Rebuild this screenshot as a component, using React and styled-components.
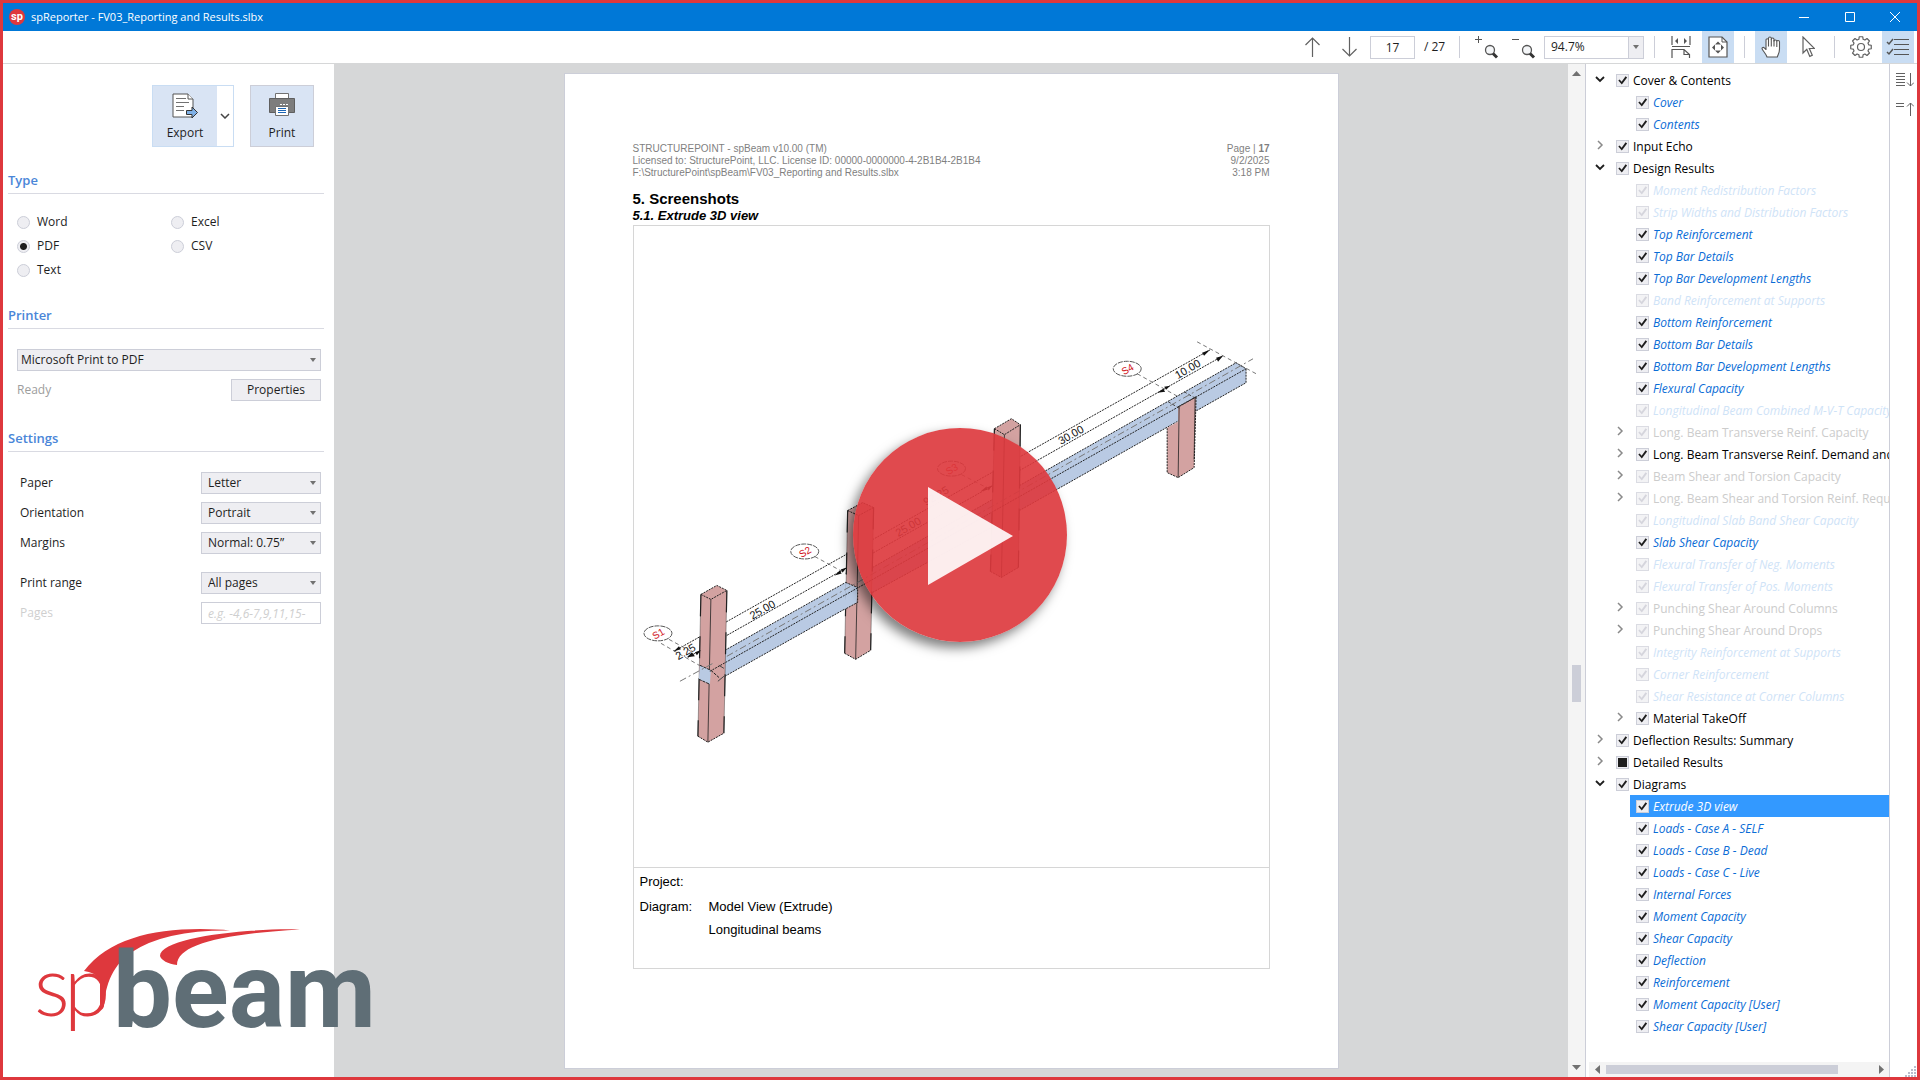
import React from 'react'
import styled, { createGlobalStyle } from 'styled-components'

const uiFont = '"Open Sans", "Noto Sans", sans-serif'
const docFont = '"Liberation Sans", Arial, sans-serif'
const red = '#de383d'
const blue = '#0078d7'
const link = '#0a6cd6'
const line = '#ccced8'
const control = '#eeeef2'
const active = '#c9ddf3'
const canvas = '#d6d7d8'

const GlobalStyle = createGlobalStyle`
  * {
    box-sizing: border-box;
  }

  body {
    margin: 0;
    font-family: ${uiFont};
    font-size: 12px;
    line-height: 16px;
    color: #1e1e1e;
    background: white;
  }

  button, input, select {
    font: inherit;
    color: inherit;
    margin: 0;
  }

  svg {
    display: block;
    flex: none;
  }
`

const Window = styled.div`
  position: relative;
  display: flex;
  flex-direction: column;
  min-height: 100vh;
  border: 3px solid ${red};
`

/* title bar */

const TitleBar = styled.header`
  display: flex;
  align-items: center;
  height: 28px;
  padding: 0 6px;
  color: white;
  background: ${blue};
`

const AppTitle = styled.h1`
  flex: 1;
  margin: 0 0 0 6px;
  font-size: 11px;
  font-weight: normal;
`

const WindowButtons = styled.div`
  display: flex;
`

const WindowButton = styled.button`
  display: flex;
  align-items: center;
  justify-content: center;
  width: 46px;
  height: 28px;
  padding: 0;
  border: none;
  background: none;

  &:last-child {
    width: 44px;
    margin-right: -6px;
  }
`

/* toolbar */

const Toolbar = styled.div`
  display: flex;
  align-items: center;
  justify-content: flex-end;
  gap: 5px;
  height: 33px;
  padding-right: 3px;
  border-bottom: 1px solid #d6d7d8;
`

const ToolButton = styled.button`
  display: flex;
  align-items: center;
  justify-content: center;
  width: 32px;
  height: 32px;
  padding: 0;
  border: none;
  background: ${props => props.$on ? active : 'none'};
`

const Divider = styled.div`
  width: 1px;
  height: 22px;
  margin: 0 5px;
  background: ${line};
`

const PageInput = styled.input`
  width: 45px;
  height: 23px;
  padding: 0;
  border: 1px solid ${line};
  text-align: center;
`

const PageCount = styled.span`
  width: 29px;
  text-align: center;
  white-space: nowrap;
`

const ZoomBox = styled.div`
  display: flex;
  width: 100px;
  height: 23px;
  border: 1px solid ${line};

  input {
    flex: 1;
    min-width: 0;
    padding: 0 6px;
    border: none;
  }

  button {
    display: flex;
    align-items: center;
    justify-content: center;
    width: 15px;
    padding: 0;
    border: none;
    border-left: 1px solid ${line};
    background: ${control};
  }
`

/* columns */

const Body = styled.div`
  flex: 1;
  display: flex;
  align-items: stretch;
`

const Sidebar = styled.aside`
  display: flex;
  flex-direction: column;
  width: 331px;
  padding: 21px 10px 0 5px;
`

const Actions = styled.div`
  display: flex;
  justify-content: flex-end;
  gap: 16px;
  padding-right: 10px;
  margin-bottom: 23px;
`

const SplitButton = styled.div`
  display: flex;
  height: 62px;
  border: 1px solid ${active};
`

const BigButton = styled.button`
  display: flex;
  flex-direction: column;
  align-items: center;
  justify-content: space-between;
  width: 64px;
  height: ${props => props.$bordered ? '62px' : '60px'};
  padding: 7px 0 5px;
  border: ${props => props.$bordered ? '1px solid ' + line : 'none'};
  background: #d9e4f4;
`

const DropButton = styled.button`
  display: flex;
  align-items: center;
  justify-content: center;
  width: 16px;
  padding: 0;
  border: none;
  background: white;
`

const SectionTitle = styled.h2`
  margin: 0 0 ${props => props.$gap}px;
  padding-bottom: 3px;
  border-bottom: 1px solid #d9dae2;
  font-size: 13px;
  line-height: 20px;
  font-weight: 600;
  color: #4a86d8;
`

const RadioGrid = styled.div`
  display: grid;
  grid-template-columns: 154px 1fr;
  grid-auto-rows: 24px;
  padding-left: 9px;
  margin-bottom: 23px;
`

const RadioLabel = styled.label`
  display: flex;
  align-items: center;
  gap: 7px;
`

const Radio = styled.input`
  appearance: none;
  width: 13px;
  height: 13px;
  border: 1px solid ${line};
  border-radius: 50%;
  background: ${control};

  &:checked {
    background: radial-gradient(circle, #1e1e1e 3px, ${control} 4px);
  }
`

const Fields = styled.div`
  display: flex;
  flex-direction: column;
  gap: 8px;
  padding: 0 3px 0 ${props => props.$indent}px;
  margin-bottom: 27px;
`

const Field = styled.div`
  display: flex;
  align-items: center;
  justify-content: space-between;
  margin-top: ${props => props.$apart ? '10px' : '0'};
  color: ${props => props.$off ? '#cfcfcf' : 'inherit'};
`

const SelectBox = styled.span`
  display: grid;
  align-items: center;
  width: ${props => props.$wide ? '100%' : '120px'};

  > * {
    grid-area: 1 / 1;
  }

  svg {
    justify-self: end;
    margin-right: 5px;
    pointer-events: none;
  }
`

const Select = styled.select`
  appearance: none;
  width: 100%;
  height: 22px;
  padding: 0 20px 0 ${props => props.$wide ? '3px' : '6px'};
  border: 1px solid ${line};
  border-radius: 0;
  background: ${control};
`

const TextField = styled.input`
  width: 120px;
  height: 22px;
  padding: 0 6px;
  border: 1px solid ${line};
  background: white;

  &::placeholder {
    font-style: italic;
    color: #cfcfcf;
    opacity: 1;
  }
`

const Muted = styled.span`
  color: #9d9d9d;
`

const SmallButton = styled.button`
  width: 90px;
  height: 22px;
  padding: 0;
  border: 1px solid ${line};
  background: ${control};
`

/* document */

const Viewer = styled.main`
  flex: 1;
  display: flex;
  justify-content: center;
  padding: 9px 0 8px;
  background: ${canvas};
`

const Paper = styled.article`
  width: 775px;
  padding: 69px 68px 80px 68px;
  border: 1px solid ${line};
  background: white;
  font-family: ${docFont};
  color: black;
`

const PaperHead = styled.div`
  display: flex;
  justify-content: space-between;
  margin-bottom: 10px;
  font-size: 10px;
  line-height: 12px;
  color: #7f7f7f;

  p {
    margin: 0;
  }

  div:last-child {
    text-align: right;
  }
`

const Chapter = styled.h2`
  margin: 0;
  font-size: 15px;
  line-height: 19px;
`

const SubChapter = styled.h3`
  margin: 0;
  font-size: 13px;
  line-height: 16px;
  font-style: italic;
`

const Figure = styled.figure`
  margin: 1px 0 0;
  border: 1px solid #d6d6d6;

  > svg {
    width: 100%;
    height: auto;
  }
`

const Caption = styled.figcaption`
  display: grid;
  grid-template-columns: 69px 1fr;
  grid-template-rows: 19px 17px 17px;
  row-gap: 6px;
  padding: 5px 6px 30px;
  border-top: 1px solid #d6d6d6;
  font-size: 13px;
  line-height: 17px;
`

/* scroll bars */

const VScroll = styled.div`
  display: flex;
  flex-direction: column;
  align-items: center;
  width: 18px;
  padding: 6px 0;
  border-right: 1px solid ${line};
  background: #f4f4f4;
`

const Track = styled.div`
  flex: 1;
  align-self: stretch;
  display: grid;
  ${props => props.$across
    ? 'grid-template-columns: 232px 1fr; align-items: center;'
    : 'grid-template-rows: 589fr 37px 363fr; justify-items: center;'}
`

const Thumb = styled.div`
  background: ${line};
  ${props => props.$across ? 'height: 9px;' : 'width: 9px; grid-row: 2;'}
`

const HScroll = styled.div`
  display: flex;
  align-items: center;
  gap: 6px;
  height: 15px;
  margin: auto 0 0 3px;
  padding: 0 4px 0 5px;
  background: #f4f4f4;
`

/* contents tree */

const Explorer = styled.nav`
  display: flex;
  flex-direction: column;
  width: 304px;
  padding-top: 5px;
  border-right: 1px solid ${line};
  overflow: hidden;
`

const Tree = styled.ul`
  margin: 0;
  padding: 0;
  list-style: none;
`

const TreeRow = styled.li`
  display: flex;
  align-items: center;
  height: 22px;
  margin-left: ${props => props.$sub ? '24px' : '4px'};
  white-space: nowrap;
`

const Toggle = styled.button`
  flex: none;
  display: flex;
  align-items: center;
  justify-content: center;
  width: 20px;
  height: 20px;
  padding: 0 0 2px;
  border: none;
  background: none;
`

const TreeItem = styled.label`
  flex: 1 0 auto;
  display: flex;
  align-items: center;
  gap: 4px;
  height: 22px;
  padding: 1px 0 0 6px;
  font-style: ${props => props.$leaf ? 'italic' : 'normal'};
  font-weight: ${props => props.$leaf ? 'normal' : '500'};
  color: ${props => {
    if (props.$selected) return 'white'
    if (props.$off) return props.$leaf ? '#cfe3f7' : '#cccccc'
    return props.$leaf ? link : 'black'
  }};
  background: ${props => props.$selected ? '#3399ff' : 'none'};
`

const Check = styled.input`
  appearance: none;
  flex: none;
  display: grid;
  width: 13px;
  height: 13px;
  border: 1px solid ${line};
  background: ${control};
  opacity: ${props => props.disabled ? '0.7' : '1'};

  &::before {
    content: '';
    background: ${props => props.disabled ? '#c4c4ce' : '#1e1e1e'};
    margin: ${props => props.$partial ? '1px' : '0'};
    clip-path: ${props => props.$partial
      ? 'none'
      : 'polygon(12% 50%, 24% 40%, 42% 62%, 78% 12%, 92% 22%, 44% 86%)'};
  }
`

const SideStrip = styled.div`
  display: flex;
  flex-direction: column;
  align-items: center;
  width: 27px;
  padding: 6px 0 0 2px;
`

const StripButton = styled.button`
  padding: 3px 0 12px;
  border: none;
  background: none;
`

const Grip = styled.div`
  margin: auto 0 0 auto;
`

/* things lying over the window */

const PlayLayer = styled.div`
  position: absolute;
  inset: 0;
  display: flex;
  align-items: center;
  justify-content: center;
  padding-bottom: 11px;
  pointer-events: none;
`

const PlayButton = styled.button`
  width: 214px;
  height: 214px;
  padding: 0;
  border: none;
  border-radius: 50%;
  background: rgba(221, 56, 60, 0.91);
  box-shadow: -5px 6px 12px rgba(0, 0, 0, 0.5);
  pointer-events: auto;
`

const Logo = styled.svg`
  position: absolute;
  left: 27px;
  bottom: 7px;
`

/* icons */

const Caret = ({ up }) => (
  <svg width="9" height="6" viewBox="0 0 9 6" fill="#717171">
    <path d={up ? 'M0 6 4.500 1 9 6z' : 'M0 0h9L4.500 5z'}/>
  </svg>
)

const SmallCaret = () => (
  <svg width="6" height="4" viewBox="0 0 6 4" fill="#717171">
    <path d="M0 0h6L3 4z"/>
  </svg>
)

const SideCaret = ({ right }) => (
  <svg width="6" height="9" viewBox="0 0 6 9" fill="#717171">
    <path d={right ? 'M0 0v9l5-4.500z' : 'M6 0v9L1 4.500z'}/>
  </svg>
)

const Chevron = ({ open }) => (
  <svg width="10" height="10" viewBox="0 0 10 10" fill="none" stroke={open ? '#1e1e1e' : '#8a8a8a'} strokeWidth={open ? 1.8 : 1.5}>
    <path d={open ? 'M1 3l4 4 4-4' : 'M3 1l4 4-4 4'}/>
  </svg>
)

const ArrowIcon = ({ down }) => (
  <svg width="16" height="20" viewBox="0 0 16 20" fill="none" stroke="#616161" strokeWidth="1.2">
    <path d={down ? 'M8.500 0v19M1.500 12l7 7 7-7' : 'M8.500 20V1M1.500 8l7-7 7 7'}/>
  </svg>
)

const MagnifierIcon = ({ plus }) => (
  <svg width="26" height="24" viewBox="0 0 26 24" fill="none" stroke="#555">
    <path d={plus ? 'M2 4.500h7M5.500 1v7' : 'M2 4.500h7'}/>
    <circle cx="17" cy="15" r="4.500" fill="#f4f6f8" strokeWidth="1.300"/>
    <path d="M20 18.500l4 4" stroke="#333" strokeWidth="3"/>
  </svg>
)

const FitWidthIcon = () => (
  <svg width="20" height="22" viewBox="0 0 20 22" fill="none" stroke="#555" strokeWidth="1.200">
    <path d="M1 0v9M19 0v9M1 10.500h18M1 22v-8.500h12l5.500 5V22M13 13.500v5h5.500"/>
    <path d="M4 5l3-3v6zM16 5l-3-3v6z" fill="#555" stroke="none"/>
  </svg>
)

const FitPageIcon = () => (
  <svg width="20" height="22" viewBox="0 0 20 22" fill="none" stroke="#555">
    <path d="M1 1h13l5 5v15H1z" fill="white" strokeWidth="1.200"/>
    <path d="M14 1v5h5"/>
    <path d="M10 5.500l3 3H7zM10 17.500l3-3H7zM4 11.500l3-3v6zM16 11.500l-3-3v6z" fill="#555" stroke="none"/>
    <path d="M10 8.500l3 3-3 3-3-3z" fill="white" stroke="none"/>
  </svg>
)

const HandIcon = () => (
  <svg width="20" height="22" viewBox="0 0 20 22" fill="white" stroke="#555" strokeWidth="1.100" strokeLinejoin="round">
    <path d="M6 21c-1-3-3-5-4.600-7.500-1-1.600.6-2.700 1.900-1.600L5 13.500V4c0-1.700 2.400-1.700 2.500 0V2.300c.1-1.800 2.700-1.800 2.800 0v.9c.2-1.700 2.600-1.600 2.700.1v1.800c.3-1.500 2.700-1.400 2.800.3.200-1.300 2.600-1.200 2.700.5V13c0 4-1.500 5.500-2.200 8z"/>
    <path d="M7.500 4v6.500M10.300 3v7.500M13 4v6.500M15.800 5.500V11" fill="none"/>
  </svg>
)

const PointerIcon = () => (
  <svg width="14" height="22" viewBox="0 0 14 22" fill="white" stroke="#616161" strokeWidth="1.200">
    <path d="M2 1v16l3.800-3.600 3 7 2.500-1.100-3-6.800h5.200z"/>
  </svg>
)

// outline of an eight toothed wheel, four points for every tooth
const gearPath = Array.from({ length: 8 }, (_, i) => (
  [[-0.27, 8], [-0.17, 10.4], [0.17, 10.4], [0.27, 8]].map(([turn, r]) => {
    const a = i * Math.PI / 4 + turn
    return `${(11 + r * Math.sin(a)).toFixed(2)} ${(11 - r * Math.cos(a)).toFixed(2)}`
  }).join('L')
)).join('L')

const GearIcon = () => (
  <svg width="22" height="22" viewBox="0 0 22 22" fill="none" stroke="#616161" strokeWidth="1.200" strokeLinejoin="round">
    <path d={`M${gearPath}z`}/>
    <circle cx="11" cy="11" r="3.500"/>
  </svg>
)

const ChecklistIcon = () => (
  <svg width="24" height="20" viewBox="0 0 24 20" fill="none" stroke="#555" strokeWidth="1.200">
    <path d="M8 2.500h15M8 7.500h15M8 12.500h15M8 17.500h15" strokeWidth="1"/>
    <path d="M1 5l2 2 4-5M1 15l2 2 4-5" strokeWidth="1.500"/>
  </svg>
)

const ExportIcon = () => (
  <svg width="26" height="26" viewBox="0 0 26 26">
    <path d="M1 1h15l5 5v18H1z" fill="white" stroke="#555"/>
    <path d="M16 1v5h5" fill="white" stroke="#555"/>
    <path d="M4 5.500h10M4 9.500h13M4 13.500h8M4 17.500h8" stroke="#717171"/>
    <path d="M14.500 17.500H20V14l5.500 5.500L20 25v-3.500h-5.500z" fill="#7fb0e6" stroke="#333"/>
  </svg>
)

const PrinterIcon = () => (
  <svg width="26" height="23" viewBox="0 0 26 23">
    <path d="M6.500.5h13V6h-13z" fill="white" stroke="#717171"/>
    <path d="M.5 5.500h25v14H.5z" fill="#7d7d7d" stroke="#5f5f5f"/>
    <path d="M11 11.500h2M14 11.500h2M17 11.500h2" stroke="white"/>
    <path d="M6.500 13.500h13v9h-13z" fill="white" stroke="#717171"/>
    <path d="M9 15.500h8M9 17.500h8M9 19.500h8" stroke="#1d66b5"/>
  </svg>
)

const ExpandIcon = () => (
  <svg width="18" height="14" viewBox="0 0 18 14" fill="none" stroke="#616161">
    <path d="M0 .5h9M0 3.500h9M0 6.500h9M0 9.500h9M0 12.500h9M14.500 0v13M11 9.500l3.500 3.500L18 9.500"/>
  </svg>
)

const CollapseIcon = () => (
  <svg width="18" height="14" viewBox="0 0 18 14" fill="none" stroke="#616161">
    <path d="M0 1.500h8M0 4.500h8M14.500 14V1M11 4.500L14.500 1 18 4.500"/>
  </svg>
)

const GripDots = () => (
  <svg width="12" height="12" viewBox="0 0 12 12" fill="#b8bccb">
    {[[9, 1], [6, 4], [9, 4], [3, 7], [6, 7], [9, 7], [0, 10], [3, 10], [6, 10], [9, 10]].map(([x, y]) => (
      <rect key={`${x}-${y}`} x={x} y={y} width="2" height="2"/>
    ))}
  </svg>
)

const AppIcon = () => (
  <svg width="16" height="16" viewBox="0 0 16 16">
    <circle cx="8" cy="8" r="8" fill={red}/>
    <text x="8" y="11" textAnchor="middle" fontFamily="Roboto, sans-serif" fontSize="11" fontWeight="700" fill="white">sp</text>
  </svg>
)

/* 3D beam model, in page coordinates */

const rose = '#d3a2a1'
const steel = '#b9cae3'

const columns = [
  { top: [[700, 595], [716, 586], [726, 591], [710, 600]], foot: [[697, 737], [707, 743], [723, 734]] },
  { top: [[847, 511], [862, 503], [873, 508], [858, 516]], foot: [[844, 654], [855, 660], [870, 651]] },
  { top: [[994, 429], [1011, 419], [1020, 425], [1004, 435]], foot: [[990, 572], [1001, 578], [1018, 568]] },
]

const marks = [
  { name: 'S1', x: 657, y: 634 },
  { name: 'S2', x: 804, y: 552 },
  { name: 'S3', x: 951, y: 469 },
  { name: 'S4', x: 1127, y: 369 },
]

const spans = [
  { text: '2.25', x: 685, y: 653 },
  { text: '25.00', x: 762, y: 611 },
  { text: '25.00', x: 908, y: 528 },
  { text: '92.25', x: 936, y: 497 },
  { text: '30.00', x: 1071, y: 436 },
  { text: '10.00', x: 1188, y: 370 },
]

const Column = ({ top, foot }) => {
  const [left, back, right, front] = top
  const [a, b, c] = foot
  return (
    <g stroke="#222" strokeWidth="1">
      <polygon points={[left, back, right, c, b, a].join(' ')} fill={rose} stroke="none"/>
      <path d={`M${left}L${back}L${right}M${left}L${front}L${right}M${a}L${b}L${c}`} fill="none" strokeDasharray="2 1"/>
      <path d={`M${left}L${a}M${right}L${c}`} strokeWidth="1.200" strokeDasharray="22 20"/>
      <path d={`M${left}L${a}M${right}L${c}`} opacity="0.4"/>
      <path d={`M${front}L${b}`} opacity="0.800"/>
    </g>
  )
}

const BeamModel = () => (
  <svg viewBox="633 226 636 642" fill="none" stroke="#222" strokeWidth="1">
    <path d="M673 652L1210 350M687 658L1223 356" strokeDasharray="2 1"/>
    <path d="M660 644L700 667M668 640L690 652M814 557L847 575M961 475L992 491M1137 374L1196 407M1197 342L1258 375" stroke="#777" strokeDasharray="4 3"/>

    <polygon points="724,651 845,583 857,588 856,603 724,677" fill={steel} stroke="none"/>
    <path d="M724 651L845 583L857 588M724 677L856 603V588" strokeDasharray="2 1"/>
    <polygon points="872,568 992,500 1002,506 1002,522 872,593" fill={steel} stroke="none"/>
    <path d="M872 568L992 500L1002 506M872 593L1002 522V506" strokeDasharray="2 1"/>
    <polygon points="1019,486 1236,363 1246,369 1246,383 1019,511" fill={steel} stroke="none"/>
    <path d="M1019 486L1236 363L1246 369V383L1019 511" strokeDasharray="2 1"/>

    {columns.map(column => <Column key={column.top[0][0]} {...column}/>)}

    <polygon points="845,583 857,588 856,603 844,610" fill={steel} stroke="none"/>
    <path d="M845 583L857 588V603L844 610" strokeDasharray="2 1"/>

    <polygon points="1167,428 1178,422 1178,407 1196,397 1194,468 1178,478 1167,473" fill={rose} stroke="none"/>
    <path d="M1178 407L1196 397L1194 468L1178 478L1167 473V428" strokeDasharray="2 1"/>
    <path d="M1179 407L1178 478M1195 397L1194 460" strokeWidth="0.800"/>

    <polygon points="699,666 710,671 709,685 698,680" fill={steel} stroke="none"/>
    <path d="M699 666L710 671L719 679M698 680L709 685" strokeDasharray="3 1"/>
    <path d="M709 672L1246 369" strokeDasharray="2 1"/>
    <path d="M726 657L1253 359M679 682L714 663" stroke="#777" strokeDasharray="7 3 2 3"/>
    <path d="M718 666l5 3M717 682l6-5" stroke="#444"/>
    <path d="M1168 402L1180 409M1184 392L1196 399" stroke="#444" strokeDasharray="3 2"/>

    <g fill="#111" stroke="none">
      <path d="M673 652l5-5 2 3zM686 658l5-5 3 4zM700 651l-6 2 2 3zM834 576l5-5 2 3zM846 568l-6 2 2 3z"/>
      <path d="M980 492l6-5 2 3zM992 486l-6 2 2 3zM1157 393l6-4 2 3zM1170 386l-6 1 2 3z"/>
      <path d="M1210 350l-8 3 2 3zM1223 356l-7 2 2 4z"/>
    </g>

    {marks.map(mark => (
      <g key={mark.name}>
        <ellipse cx={mark.x} cy={mark.y} rx="14" ry="7.500" stroke="#555" strokeDasharray="5 1"/>
        <text x={mark.x} y={mark.y + 4} transform={`rotate(-30 ${mark.x} ${mark.y})`} textAnchor="middle" fontSize="10" fill="#d0121b" stroke="none">{mark.name}</text>
      </g>
    ))}
    {spans.map(span => (
      <text key={span.x} x={span.x} y={span.y + 3} transform={`rotate(-30 ${span.x} ${span.y})`} textAnchor="middle" fontSize="11" fill="#111" stroke="none">{span.text}</text>
    ))}
  </svg>
)

const tree = [
  { name: 'Cover & Contents', open: true },
  { name: 'Cover', leaf: true },
  { name: 'Contents', leaf: true },
  { name: 'Input Echo' },
  { name: 'Design Results', open: true },
  { name: 'Moment Redistribution Factors', leaf: true, off: true },
  { name: 'Strip Widths and Distribution Factors', leaf: true, off: true },
  { name: 'Top Reinforcement', leaf: true },
  { name: 'Top Bar Details', leaf: true },
  { name: 'Top Bar Development Lengths', leaf: true },
  { name: 'Band Reinforcement at Supports', leaf: true, off: true },
  { name: 'Bottom Reinforcement', leaf: true },
  { name: 'Bottom Bar Details', leaf: true },
  { name: 'Bottom Bar Development Lengths', leaf: true },
  { name: 'Flexural Capacity', leaf: true },
  { name: 'Longitudinal Beam Combined M-V-T Capacity', leaf: true, off: true },
  { name: 'Long. Beam Transverse Reinf. Capacity', sub: true, off: true },
  { name: 'Long. Beam Transverse Reinf. Demand and Capacity', sub: true },
  { name: 'Beam Shear and Torsion Capacity', sub: true, off: true },
  { name: 'Long. Beam Shear and Torsion Reinf. Required', sub: true, off: true },
  { name: 'Longitudinal Slab Band Shear Capacity', leaf: true, off: true },
  { name: 'Slab Shear Capacity', leaf: true },
  { name: 'Flexural Transfer of Neg. Moments', leaf: true, off: true },
  { name: 'Flexural Transfer of Pos. Moments', leaf: true, off: true },
  { name: 'Punching Shear Around Columns', sub: true, off: true },
  { name: 'Punching Shear Around Drops', sub: true, off: true },
  { name: 'Integrity Reinforcement at Supports', leaf: true, off: true },
  { name: 'Corner Reinforcement', leaf: true, off: true },
  { name: 'Shear Resistance at Corner Columns', leaf: true, off: true },
  { name: 'Material TakeOff', sub: true },
  { name: 'Deflection Results: Summary' },
  { name: 'Detailed Results', partial: true },
  { name: 'Diagrams', open: true },
  { name: 'Extrude 3D view', leaf: true, selected: true },
  { name: 'Loads - Case A - SELF', leaf: true },
  { name: 'Loads - Case B - Dead', leaf: true },
  { name: 'Loads - Case C - Live', leaf: true },
  { name: 'Internal Forces', leaf: true },
  { name: 'Moment Capacity', leaf: true },
  { name: 'Shear Capacity', leaf: true },
  { name: 'Deflection', leaf: true },
  { name: 'Reinforcement', leaf: true },
  { name: 'Moment Capacity [User]', leaf: true },
  { name: 'Shear Capacity [User]', leaf: true },
]

const LeafSpace = styled.span`
  flex: none;
  width: 20px;
`

const Node = ({ item }) => (
  <TreeRow $sub={item.leaf || item.sub}>
    {item.leaf
      ? <LeafSpace/>
      : <Toggle aria-label={`Toggle ${item.name}`}><Chevron open={item.open}/></Toggle>}
    <TreeItem $leaf={item.leaf} $off={item.off} $selected={item.selected}>
      <Check type="checkbox" defaultChecked disabled={item.off} $partial={item.partial}/>
      {item.name}
    </TreeItem>
  </TreeRow>
)

const formats = ['Word', 'Excel', 'PDF', 'CSV', 'Text']

const settings = [
  { id: 'paper', label: 'Paper', value: 'Letter' },
  { id: 'orientation', label: 'Orientation', value: 'Portrait' },
  { id: 'margins', label: 'Margins', value: 'Normal: 0.75”' },
  { id: 'range', label: 'Print range', value: 'All pages', apart: true },
]

const App = () => (
  <Window>
    <GlobalStyle/>

    <TitleBar>
      <AppIcon/>
      <AppTitle>spReporter - FV03_Reporting and Results.slbx</AppTitle>
      <WindowButtons>
        <WindowButton aria-label="Minimize">
          <svg width="10" height="10" stroke="white"><path d="M0 5.500h10"/></svg>
        </WindowButton>
        <WindowButton aria-label="Maximize">
          <svg width="10" height="10" stroke="white" fill="none"><path d="M.5.5h9v9h-9z"/></svg>
        </WindowButton>
        <WindowButton aria-label="Close">
          <svg width="10" height="10" stroke="white"><path d="M0 0l10 10M10 0L0 10"/></svg>
        </WindowButton>
      </WindowButtons>
    </TitleBar>

    <Toolbar>
      <ToolButton aria-label="Previous page"><ArrowIcon/></ToolButton>
      <ToolButton aria-label="Next page"><ArrowIcon down/></ToolButton>
      <PageInput aria-label="Page" defaultValue="17"/>
      <PageCount>/ 27</PageCount>
      <Divider/>
      <ToolButton aria-label="Zoom in"><MagnifierIcon plus/></ToolButton>
      <ToolButton aria-label="Zoom out"><MagnifierIcon/></ToolButton>
      <ZoomBox>
        <input aria-label="Zoom" defaultValue="94.7%"/>
        <button aria-label="Zoom levels"><SmallCaret/></button>
      </ZoomBox>
      <Divider/>
      <ToolButton aria-label="Fit width"><FitWidthIcon/></ToolButton>
      <ToolButton aria-label="Fit page" $on><FitPageIcon/></ToolButton>
      <Divider/>
      <ToolButton aria-label="Pan" $on><HandIcon/></ToolButton>
      <ToolButton aria-label="Select"><PointerIcon/></ToolButton>
      <Divider/>
      <ToolButton aria-label="Settings"><GearIcon/></ToolButton>
      <ToolButton aria-label="Contents" $on><ChecklistIcon/></ToolButton>
    </Toolbar>

    <Body>
      <Sidebar>
        <Actions>
          <SplitButton>
            <BigButton><ExportIcon/>Export</BigButton>
            <DropButton aria-label="Export options">
              <svg width="10" height="6" fill="none" stroke="#444" strokeWidth="1.500"><path d="M1 1l4 4 4-4"/></svg>
            </DropButton>
          </SplitButton>
          <BigButton $bordered><PrinterIcon/>Print</BigButton>
        </Actions>

        <SectionTitle $gap={16}>Type</SectionTitle>
        <RadioGrid>
          {formats.map(format => (
            <RadioLabel key={format}>
              <Radio type="radio" name="format" defaultChecked={format === 'PDF'}/>
              {format}
            </RadioLabel>
          ))}
        </RadioGrid>

        <SectionTitle $gap={20}>Printer</SectionTitle>
        <Fields $indent={9}>
          <SelectBox $wide>
            <Select $wide aria-label="Printer"><option>Microsoft Print to PDF</option></Select>
            <SmallCaret/>
          </SelectBox>
          <Field>
            <Muted>Ready</Muted>
            <SmallButton>Properties</SmallButton>
          </Field>
        </Fields>

        <SectionTitle $gap={20}>Settings</SectionTitle>
        <Fields $indent={12}>
          {settings.map(setting => (
            <Field key={setting.id} $apart={setting.apart}>
              <label htmlFor={setting.id}>{setting.label}</label>
              <SelectBox>
                <Select id={setting.id}><option>{setting.value}</option></Select>
                <SmallCaret/>
              </SelectBox>
            </Field>
          ))}
          <Field $off>
            <label htmlFor="pages">Pages</label>
            <TextField id="pages" disabled placeholder="e.g. -4,6-7,9,11,15-"/>
          </Field>
        </Fields>
      </Sidebar>

      <Viewer>
        <Paper>
          <PaperHead>
            <div>
              <p>STRUCTUREPOINT - spBeam v10.00 (TM)</p>
              <p>Licensed to: StructurePoint, LLC. License ID: 00000-0000000-4-2B1B4-2B1B4</p>
              <p>F:\StructurePoint\spBeam\FV03_Reporting and Results.slbx</p>
            </div>
            <div>
              <p>Page | <b>17</b></p>
              <p>9/2/2025</p>
              <p>3:18 PM</p>
            </div>
          </PaperHead>
          <Chapter>5. Screenshots</Chapter>
          <SubChapter>5.1. Extrude 3D view</SubChapter>
          <Figure>
            <BeamModel/>
            <Caption>
              <span>Project:</span>
              <span/>
              <span>Diagram:</span>
              <span>Model View (Extrude)</span>
              <span/>
              <span>Longitudinal beams</span>
            </Caption>
          </Figure>
        </Paper>
      </Viewer>

      <VScroll>
        <Caret up/>
        <Track><Thumb/></Track>
        <Caret/>
      </VScroll>

      <Explorer>
        <Tree>
          {tree.map(item => <Node key={item.name} item={item}/>)}
        </Tree>
        <HScroll>
          <SideCaret/>
          <Track $across><Thumb $across/></Track>
          <SideCaret right/>
        </HScroll>
      </Explorer>

      <SideStrip>
        <StripButton aria-label="Expand all"><ExpandIcon/></StripButton>
        <StripButton aria-label="Collapse all"><CollapseIcon/></StripButton>
        <Grip><GripDots/></Grip>
      </SideStrip>
    </Body>

    <PlayLayer>
      <PlayButton aria-label="Play">
        <svg width="214" height="214" viewBox="0 0 214 214">
          <path d="M75 59L160 108L75 157z" fill="white" fillOpacity="0.900"/>
        </svg>
      </PlayButton>
    </PlayLayer>

    <Logo width="350" height="170" viewBox="30 900 350 170">
      <path d="M84 971C108 940 150 929 200 929Q218 929 230 930.500Q165 930 132 952C114 963 105 985 104 1006Q103 1010 100 1010V979Q94 972 84 971z" fill={red}/>
      <path d="M300 929.500C250 928 160 937 160 956C161 960 168 964 177 965C177 945 220 934 300 929.500z" fill={red}/>
      <text x="34 64" y="1016" fontFamily="'Liberation Sans Narrow', Lato" fontWeight="300" fontSize="84" fill={red}>sp</text>
      <text x="113" y="1027" fontFamily="Roboto, sans-serif" fontWeight="700" fontSize="105" fill="#5f6e76">beam</text>
    </Logo>
  </Window>
)

export default App
